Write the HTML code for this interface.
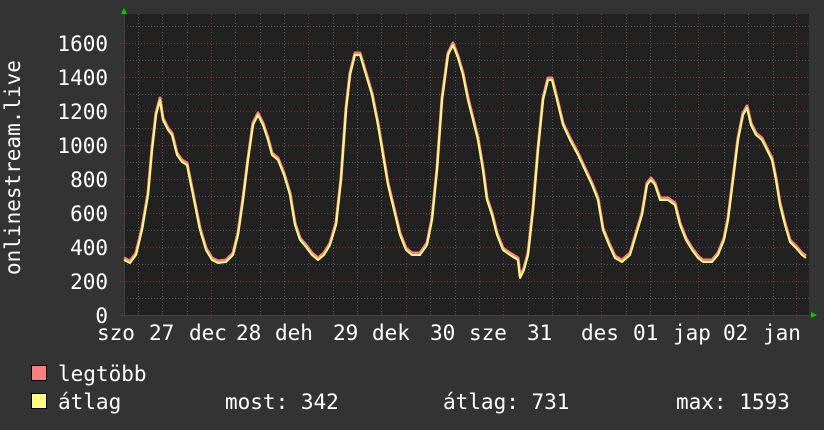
<!DOCTYPE html>
<html><head><meta charset="utf-8"><style>
html,body{margin:0;padding:0;background:#333333;}
svg{display:block;}
text{font-family:"DejaVu Sans Mono","Liberation Mono",monospace;fill:#ffffff;}
</style></head><body>
<svg width="824" height="430" viewBox="0 0 824 430" xmlns="http://www.w3.org/2000/svg">
<rect width="824" height="430" fill="#333333"/>
<rect x="124" y="14" width="685" height="301" fill="#212121"/>
<g stroke="#555" stroke-width="1" stroke-dasharray="1,2">
<line x1="124" x2="809" y1="298.5" y2="298.5"/><line x1="124" x2="809" y1="264.5" y2="264.5"/><line x1="124" x2="809" y1="230.5" y2="230.5"/><line x1="124" x2="809" y1="196.5" y2="196.5"/><line x1="124" x2="809" y1="162.5" y2="162.5"/><line x1="124" x2="809" y1="128.5" y2="128.5"/><line x1="124" x2="809" y1="94.5" y2="94.5"/><line x1="124" x2="809" y1="60.5" y2="60.5"/><line x1="124" x2="809" y1="26.5" y2="26.5"/>
<line y1="14" y2="315" x1="138.5" x2="138.5"/><line y1="14" y2="315" x1="162.5" x2="162.5"/><line y1="14" y2="315" x1="187.5" x2="187.5"/><line y1="14" y2="315" x1="235.5" x2="235.5"/><line y1="14" y2="315" x1="260.5" x2="260.5"/><line y1="14" y2="315" x1="284.5" x2="284.5"/><line y1="14" y2="315" x1="333.5" x2="333.5"/><line y1="14" y2="315" x1="357.5" x2="357.5"/><line y1="14" y2="315" x1="381.5" x2="381.5"/><line y1="14" y2="315" x1="430.5" x2="430.5"/><line y1="14" y2="315" x1="455.5" x2="455.5"/><line y1="14" y2="315" x1="479.5" x2="479.5"/><line y1="14" y2="315" x1="528.5" x2="528.5"/><line y1="14" y2="315" x1="552.5" x2="552.5"/><line y1="14" y2="315" x1="577.5" x2="577.5"/><line y1="14" y2="315" x1="626.5" x2="626.5"/><line y1="14" y2="315" x1="650.5" x2="650.5"/><line y1="14" y2="315" x1="675.5" x2="675.5"/><line y1="14" y2="315" x1="724.5" x2="724.5"/><line y1="14" y2="315" x1="748.5" x2="748.5"/><line y1="14" y2="315" x1="773.5" x2="773.5"/>
</g>
<g stroke="#6a3a3a" stroke-width="1" stroke-dasharray="1,2">
<line x1="120" x2="809" y1="281.5" y2="281.5"/><line x1="120" x2="809" y1="247.5" y2="247.5"/><line x1="120" x2="809" y1="213.5" y2="213.5"/><line x1="120" x2="809" y1="179.5" y2="179.5"/><line x1="120" x2="809" y1="145.5" y2="145.5"/><line x1="120" x2="809" y1="111.5" y2="111.5"/><line x1="120" x2="809" y1="77.5" y2="77.5"/><line x1="120" x2="809" y1="43.5" y2="43.5"/>
<line y1="14" y2="319" x1="211.5" x2="211.5"/><line y1="14" y2="319" x1="308.5" x2="308.5"/><line y1="14" y2="319" x1="406.5" x2="406.5"/><line y1="14" y2="319" x1="503.5" x2="503.5"/><line y1="14" y2="319" x1="601.5" x2="601.5"/><line y1="14" y2="319" x1="698.5" x2="698.5"/><line y1="14" y2="319" x1="796.5" x2="796.5"/>
</g>
<line x1="120" x2="812" y1="315.5" y2="315.5" stroke="#444"/>
<line x1="124.5" x2="124.5" y1="12" y2="315" stroke="#444"/>
<polygon points="121,14 127,14 124,8" fill="#00cc00"/>
<polygon points="811,312 811,318 817,315" fill="#00cc00"/>
<g fill="none" stroke-linejoin="round">
<polyline id="p" stroke="#ff7f7f" stroke-width="3" transform="translate(0,-2)" points="124,260 130,263 136,255 142,230 148,195 152,150 156,115 160,100 163,120 168,130 172,135 177,155 182,162 187,165 191,185 196,210 200,230 206,250 212,260 218,263 226,262 233,255 238,235 243,200 248,160 253,125 258,115 263,125 268,140 272,155 278,160 284,175 290,195 295,225 300,240 306,247 312,255 318,260 324,255 330,245 336,225 341,180 346,110 350,75 355,55 360,55 366,75 372,95 378,125 383,155 388,185 394,210 400,235 406,250 412,255 420,255 427,245 432,220 437,170 442,100 448,55 453,45 458,58 463,75 468,100 473,120 478,140 483,170 487,200 492,215 497,235 503,250 510,255 518,260 520,278 524,270 528,255 533,210 538,150 543,100 548,80 552,80 557,100 563,125 570,140 578,155 585,170 592,185 598,200 603,230 609,245 615,258 622,262 630,255 636,235 642,215 647,185 651,180 655,185 660,200 668,200 675,205 680,225 686,240 692,250 698,258 703,262 712,262 718,255 724,240 728,220 733,180 738,140 743,115 747,108 751,125 756,135 762,140 767,150 772,160 776,180 780,205 785,225 790,242 796,248 802,255 806,258"/>
<polyline stroke="#ffff80" stroke-width="2" points="124,260 130,263 136,255 142,230 148,195 152,150 156,115 160,100 163,120 168,130 172,135 177,155 182,162 187,165 191,185 196,210 200,230 206,250 212,260 218,263 226,262 233,255 238,235 243,200 248,160 253,125 258,115 263,125 268,140 272,155 278,160 284,175 290,195 295,225 300,240 306,247 312,255 318,260 324,255 330,245 336,225 341,180 346,110 350,75 355,55 360,55 366,75 372,95 378,125 383,155 388,185 394,210 400,235 406,250 412,255 420,255 427,245 432,220 437,170 442,100 448,55 453,45 458,58 463,75 468,100 473,120 478,140 483,170 487,200 492,215 497,235 503,250 510,255 518,260 520,278 524,270 528,255 533,210 538,150 543,100 548,80 552,80 557,100 563,125 570,140 578,155 585,170 592,185 598,200 603,230 609,245 615,258 622,262 630,255 636,235 642,215 647,185 651,180 655,185 660,200 668,200 675,205 680,225 686,240 692,250 698,258 703,262 712,262 718,255 724,240 728,220 733,180 738,140 743,115 747,108 751,125 756,135 762,140 767,150 772,160 776,180 780,205 785,225 790,242 796,248 802,255 806,258"/>
</g>
<g font-size="21" text-anchor="end">
<text x="108" y="323">0</text><text x="108" y="289">200</text><text x="108" y="255">400</text><text x="108" y="221">600</text><text x="108" y="187">800</text><text x="108" y="153">1000</text><text x="108" y="119">1200</text><text x="108" y="85">1400</text><text x="108" y="51">1600</text>
</g>
<text font-size="21" transform="translate(20,275) rotate(-90)">onlinestream.live</text>
<g font-size="21">
<text x="97" y="340">szo</text><text x="149" y="340">27</text><text x="189" y="340">dec</text><text x="236" y="340">28</text><text x="275" y="340">deh</text><text x="333" y="340">29</text><text x="372" y="340">dek</text><text x="430" y="340">30</text><text x="469" y="340">sze</text><text x="527" y="340">31</text><text x="581" y="340">des</text><text x="633" y="340">01</text><text x="673" y="340">jap</text><text x="723" y="340">02</text><text x="763" y="340">jan</text>
</g>
<rect x="31.5" y="365.5" width="15" height="15" fill="#ff7f7f" stroke="#000"/>
<rect x="31.5" y="393.5" width="15" height="15" fill="#ffff80" stroke="#000"/>
<g font-size="21">
<text x="58" y="381">legtöbb</text>
<text x="58" y="409">átlag</text>
<text x="225" y="409">most: 342</text>
<text x="443" y="409">átlag: 731</text>
<text x="676" y="409">max: 1593</text>
</g>
</svg>
</body></html>
